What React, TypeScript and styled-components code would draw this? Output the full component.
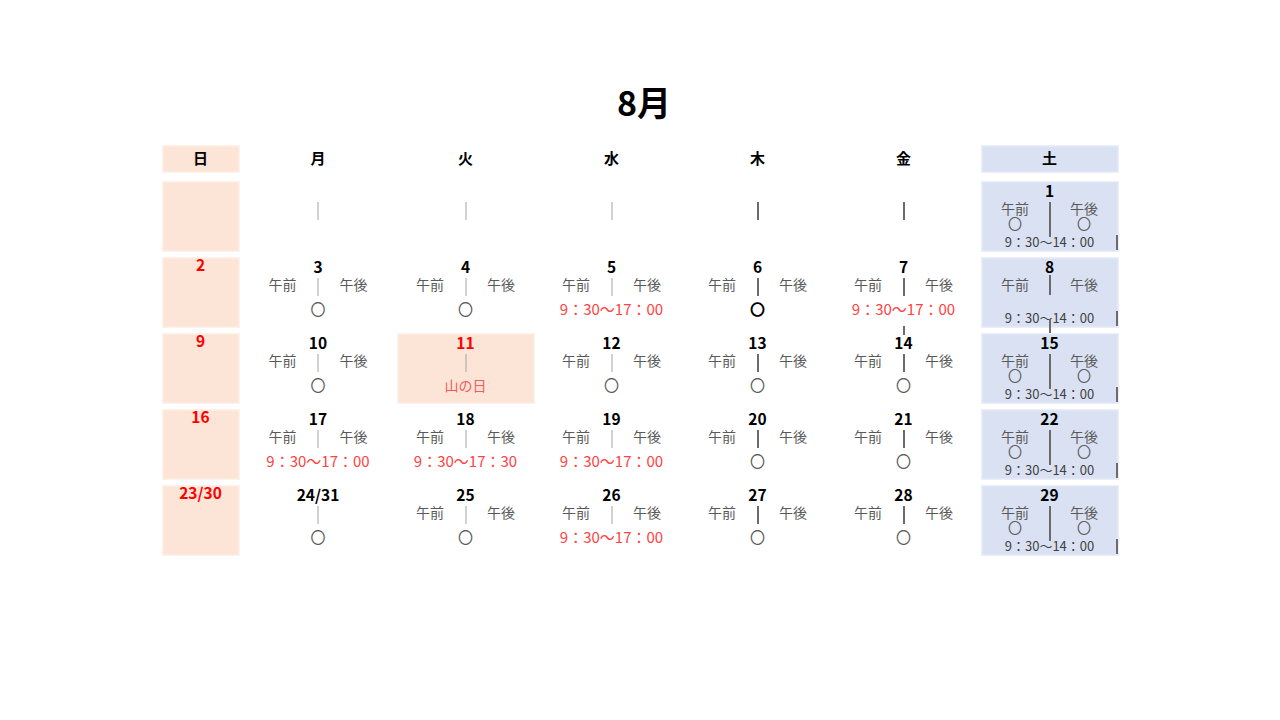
import styled, { createGlobalStyle, css } from 'styled-components'

// ── Global ─────────────────────────────────────────────────────────────────────

const GlobalStyle = createGlobalStyle`
  html, body { margin: 0; padding: 0; background: #fff; }
  body {
    font-family: "Noto Sans CJK JP", "Noto Sans", sans-serif;
    color: #000;
  }
`

// ── Styled components ──────────────────────────────────────────────────────────

type Tint = 'sun' | 'sat'

const fills: Record<Tint, string> = { sun: '#fce4d6', sat: '#d9e1f2' }
const edges: Record<Tint, string> = { sun: '#fdf1ea', sat: '#e9eef8' }

const Page = styled.div`
  width: 1280px;
  height: 720px;
  box-sizing: border-box;
  padding-top: 80px;
  display: flex;
  flex-direction: column;
  align-items: center;
`

const Title = styled.h1`
  margin: 0 0 21px;
  padding-left: 8px;
  font-size: 34px;
  line-height: 44px;
  font-weight: 700;
`

const Grid = styled.div`
  display: grid;
  grid-template-columns: 86px 149px repeat(5, 146px);
  grid-template-rows: 31px repeat(5, 71px);
  row-gap: 5px;
`

const tinted = (t?: Tint) => t && css`
  background: ${fills[t]};
  box-shadow: inset 0 0 0 1.5px ${edges[t]};
`

const HeadCell = styled.div<{ $tint?: Tint }>`
  height: 28px;
  margin: 0 4px;
  padding-bottom: 4px;
  box-sizing: border-box;
  display: flex;
  align-items: center;
  justify-content: center;
  font-size: 15px;
  font-weight: 700;
  ${p => tinted(p.$tint)}
`

const Cell = styled.div<{ $tint?: Tint }>`
  position: relative;
  margin: 0 4px;
  box-sizing: border-box;
  display: flex;
  flex-direction: column;
  align-items: center;
  ${p => tinted(p.$tint)}
`

const DayNum = styled.div<{ $red?: boolean }>`
  height: 18px;
  line-height: 18px;
  font-size: 15.5px;
  font-weight: 700;
  color: ${p => (p.$red ? '#ff0000' : '#000')};
`

const SunNum = styled(DayNum)`
  margin-top: -2px;
`

const Rule = styled.span<{ $top: number; $h: number; $dark?: boolean }>`
  position: absolute;
  left: 50%;
  top: ${p => p.$top}px;
  height: ${p => p.$h}px;
  width: ${p => (p.$dark ? 2 : 1)}px;
  transform: translateX(-50%);
  background: ${p => (p.$dark ? '#6b6b6b' : '#a3a3a3')};
`

const EdgeTick = styled.span`
  position: absolute;
  right: 1px;
  top: 54px;
  height: 15px;
  width: 1.5px;
  background: #6b6b6b;
`

const Halves = styled.div<{ $hidden?: boolean }>`
  margin-top: 1px;
  display: flex;
  gap: 43px;
  font-size: 14px;
  line-height: 16px;
  color: #595959;
  visibility: ${p => (p.$hidden ? 'hidden' : 'visible')};
`

const Status = styled.div<{ $tone: 'circle' | 'bold' | 'time' | 'holiday' }>`
  margin-top: 7px;
  line-height: 20px;
  font-size: 15px;
  white-space: nowrap;
  ${p => p.$tone === 'circle' && css`color: #595959;`}
  ${p => p.$tone === 'bold' && css`color: #000; font-weight: 700;`}
  ${p => p.$tone === 'time' && css`color: #ff4343;`}
  ${p => p.$tone === 'holiday' && css`color: #f25a5a; font-size: 14px;`}
`

const SatGrid = styled.div`
  margin-top: 2px;
  display: grid;
  grid-template-columns: 28px 28px;
  column-gap: 41px;
  justify-items: center;
  font-size: 14px;
  line-height: 14px;
  color: #595959;
`

const SatCircle = styled.span<{ $hidden?: boolean }>`
  margin-top: 2px;
  font-size: 14px;
  line-height: 13px;
  visibility: ${p => (p.$hidden ? 'hidden' : 'visible')};
`

const SatTime = styled.div`
  margin-top: 5px;
  font-size: 13px;
  line-height: 14px;
  color: #404040;
  white-space: nowrap;
`

// ── Data ───────────────────────────────────────────────────────────────────────

interface DayEntry {
  day?: string
  labels?: boolean
  circle?: 'thin' | 'bold'
  time?: string
  holiday?: string
  spill?: boolean
}

interface SatEntry {
  day: string
  circles: boolean
  split?: boolean
}

interface Week {
  sun: string
  days: DayEntry[]
  sat: SatEntry
}

const HEADS = ['日', '月', '火', '水', '木', '金', '土']
const DARK_COLS = [3, 4]
const T17 = '9：30〜17：00'
const SAT_TIME = '9：30〜14：00'

const weeks: Week[] = [
  {
    sun: '',
    days: [{}, {}, {}, {}, {}],
    sat: { day: '1', circles: true },
  },
  {
    sun: '2',
    days: [
      { day: '3', labels: true, circle: 'thin' },
      { day: '4', labels: true, circle: 'thin' },
      { day: '5', labels: true, time: T17 },
      { day: '6', labels: true, circle: 'bold' },
      { day: '7', labels: true, time: T17, spill: true },
    ],
    sat: { day: '8', circles: false, split: true },
  },
  {
    sun: '9',
    days: [
      { day: '10', labels: true, circle: 'thin' },
      { day: '11', holiday: '山の日' },
      { day: '12', labels: true, circle: 'thin' },
      { day: '13', labels: true, circle: 'thin' },
      { day: '14', labels: true, circle: 'thin' },
    ],
    sat: { day: '15', circles: true },
  },
  {
    sun: '16',
    days: [
      { day: '17', labels: true, time: T17 },
      { day: '18', labels: true, time: '9：30〜17：30' },
      { day: '19', labels: true, time: T17 },
      { day: '20', labels: true, circle: 'thin' },
      { day: '21', labels: true, circle: 'thin' },
    ],
    sat: { day: '22', circles: true },
  },
  {
    sun: '23/30',
    days: [
      { day: '24/31', circle: 'thin' },
      { day: '25', labels: true, circle: 'thin' },
      { day: '26', labels: true, time: T17 },
      { day: '27', labels: true, circle: 'thin' },
      { day: '28', labels: true, circle: 'thin' },
    ],
    sat: { day: '29', circles: true },
  },
]

// ── Cells ──────────────────────────────────────────────────────────────────────

function WeekdayCell({ entry, dark }: { entry: DayEntry; dark: boolean }) {
  const isHoliday = !!entry.holiday
  return (
    <Cell $tint={isHoliday ? 'sun' : undefined}>
      <DayNum $red={isHoliday}>{entry.day}</DayNum>
      <Rule $top={21} $h={18} $dark={dark} />
      {entry.spill && <Rule $top={69} $h={9} $dark={dark} />}
      <Halves $hidden={!entry.labels}>
        <span>午前</span>
        <span>午後</span>
      </Halves>
      {entry.circle && <Status $tone={entry.circle === 'bold' ? 'bold' : 'circle'}>〇</Status>}
      {entry.time && <Status $tone="time">{entry.time}</Status>}
      {entry.holiday && <Status $tone="holiday">{entry.holiday}</Status>}
    </Cell>
  )
}

function SaturdayCell({ entry }: { entry: SatEntry }) {
  return (
    <Cell $tint="sat">
      <DayNum>{entry.day}</DayNum>
      {entry.split ? (
        <>
          <Rule $top={18} $h={20} $dark />
          <Rule $top={62} $h={16} $dark />
        </>
      ) : (
        <Rule $top={21} $h={35} $dark />
      )}
      <EdgeTick />
      <SatGrid>
        <span>午前</span>
        <span>午後</span>
        <SatCircle $hidden={!entry.circles}>〇</SatCircle>
        <SatCircle $hidden={!entry.circles}>〇</SatCircle>
      </SatGrid>
      <SatTime>{SAT_TIME}</SatTime>
    </Cell>
  )
}

// ── Component ──────────────────────────────────────────────────────────────────

export default function App() {
  return (
    <>
      <GlobalStyle />
      <Page>
        <Title>8月</Title>
        <Grid>
          {HEADS.map((h, i) => (
            <HeadCell key={h} $tint={i === 0 ? 'sun' : i === 6 ? 'sat' : undefined}>{h}</HeadCell>
          ))}
          {weeks.map((w, wi) => [
            <Cell key={`sun-${wi}`} $tint="sun">
              <SunNum $red>{w.sun}</SunNum>
            </Cell>,
            ...w.days.map((d, di) => (
              <WeekdayCell key={`d-${wi}-${di}`} entry={d} dark={DARK_COLS.includes(di)} />
            )),
            <SaturdayCell key={`sat-${wi}`} entry={w.sat} />,
          ])}
        </Grid>
      </Page>
    </>
  )
}
